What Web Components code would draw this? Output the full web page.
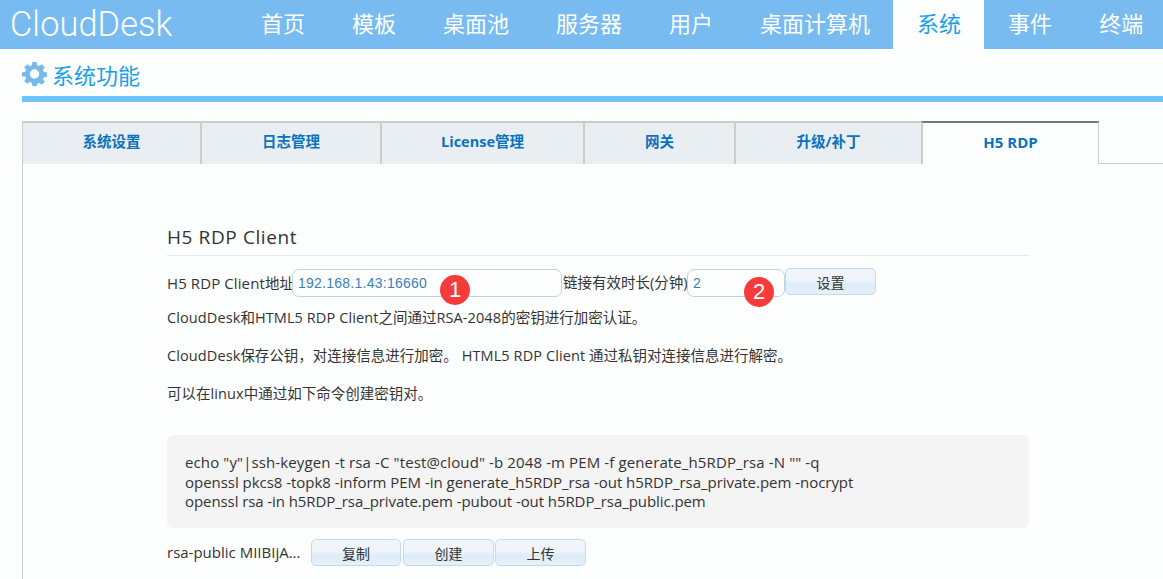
<!DOCTYPE html>
<html lang="zh"><head><meta charset="utf-8"><title>CloudDesk</title>
<style>
html,body{margin:0;padding:0;height:579px;overflow:hidden;background:#fdfffe;}
body{font-family:"Open Sans","Noto Sans CJK SC",sans-serif;font-size:14px;color:#333;}
</style></head><body>
<app-header></app-header>
<section-title>系统功能</section-title>
<tab-bar>
  <tab-item w="178" first>系统设置</tab-item>
  <tab-item w="180">日志管理</tab-item>
  <tab-item w="203"><i>License</i>管理</tab-item>
  <tab-item w="151">网关</tab-item>
  <tab-item w="187">升级<i>/</i>补丁</tab-item>
  <tab-item w="178" active><i style="font-size:15px">H5 RDP</i></tab-item>
</tab-bar>
<rdp-panel></rdp-panel>
<script>
function def(name, html, init){
  customElements.define(name, class extends HTMLElement{
    constructor(){super();this.attachShadow({mode:'open'}).innerHTML=html;}
    connectedCallback(){if(init)init(this);}
  });
}
const F='"Open Sans","Noto Sans CJK SC",sans-serif';
def('nav-item',`<style>
:host{display:block;flex:none;height:49px;line-height:47px;padding:0 23px 0 24px;font-size:22px;color:#fff;font-family:${F};white-space:nowrap}
:host([active]){background:#fdfffe;color:#1c9ee9}
</style><slot></slot>`);
def('app-header',`<style>
:host{display:flex;height:49px;background:#78bbf0;position:relative;overflow:hidden}
.logo{flex:none;width:237px;box-sizing:border-box;padding-left:10px;font:300 34.300px/48px Roboto,sans-serif;color:#fff;letter-spacing:.1px}
</style>
<div class="logo">CloudDesk</div>
<nav-item>首页</nav-item><nav-item>模板</nav-item><nav-item>桌面池</nav-item><nav-item>服务器</nav-item><nav-item>用户</nav-item><nav-item>桌面计算机</nav-item><nav-item active>系统</nav-item><nav-item>事件</nav-item><nav-item>终端</nav-item>`);
def('section-title',`<style>
:host{display:block;margin:0 0 0 22px;height:47px;border-bottom:6px solid #6cc6fb}
.r{display:flex;align-items:center;height:53px;gap:5px;font:22px/1 ${F};color:#1c9ee9}
svg{display:block;width:25px;height:25px;margin-top:-5px;flex:none}
span{margin-top:-1px}
</style><div class="r"><svg viewBox="0 0 24 24"><path fill="#78b9ec" fill-rule="evenodd" d="M10 1h4l.6 3.100 1.900.8 2.600-1.800 2.800 2.800-1.800 2.600.8 1.900L24 11v4l-3.100.6-.8 1.900 1.800 2.600-2.800 2.800-2.600-1.800-1.900.8L14 24h-4l-.6-3.100-1.900-.8-2.600 1.800-2.800-2.800 1.800-2.600-.8-1.900L0 15v-4l3.100-.6.8-1.900-1.800-2.600 2.800-2.800 2.600 1.800 1.900-.8zM12 8a4.500 4.500 0 1 0 0 9 4.500 4.500 0 0 0 0-9z"/></svg><span><slot></slot></span></div>`);
def('tab-bar',`<style>
:host{display:flex;margin:19px 0 0 22px;height:42px;border-bottom:1px solid #ccc}
</style><slot></slot>`);
def('tab-item',`<style>
:host{display:block;flex:none;box-sizing:border-box;height:43px;background:#e9eef3;border:2px solid #ccc;border-right-width:0;border-bottom:0;margin-bottom:-1px;text-align:center;font:bold 14.500px/38px ${F};color:#0b72bb;white-space:nowrap}
:host([first]){border-left-width:1px}
:host([active]){background:#fdfffe;border-top:2px solid #777;border-right:1px solid #ccc}
::slotted(i){font-style:normal}
</style><slot></slot>`,el=>{el.style.width=el.getAttribute('w')+'px'});
def('push-btn',`<style>
:host{display:block;box-sizing:border-box;height:27px;border:1px solid #c3d9ec;border-radius:5px;background:linear-gradient(#f1f6fb 0,#eef4fa 45%,#deecf8 62%,#e4f0fa);text-align:center;font:14px/27px ${F};color:#333;flex:none}
</style><slot></slot>`,el=>{el.style.width=el.getAttribute('w')+'px'});
def('text-field',`<style>
:host{display:block;box-sizing:border-box;height:28px;border:1px solid #bcd4ea;border-radius:7px;background:#fdfffe;padding:0 5px;font:14px/27px "Liberation Sans",sans-serif;letter-spacing:.25px;color:#3d7eb5;position:relative;flex:none}
.badge{position:absolute;top:var(--t);left:var(--l);width:30px;height:30px;border-radius:50%;background:#f73b3b;color:#fff;text-align:center;font:22px/30px "Liberation Sans",sans-serif;letter-spacing:0}
</style><slot></slot><span class="badge"></span>`,el=>{
  el.style.width=el.getAttribute('w')+'px';
  const b=el.shadowRoot.querySelector('.badge');b.textContent=el.getAttribute('n');
  b.style.setProperty('--l',el.getAttribute('bx')+'px');b.style.setProperty('--t',el.getAttribute('by')+'px');
});
def('code-block',`<style>
:host{display:block;box-sizing:border-box;height:93px;margin-top:13px;background:#f5f4f4;border-radius:6px;padding:18px;font:15px/19.500px ${F};color:#333;white-space:pre}
</style><slot></slot>`);
def('rdp-panel',`<style>
:host{display:block;box-sizing:border-box;margin-left:22px;height:415px;border-left:1px solid #ccc;padding:57px 0 0 144px;font:14.500px/20px ${F};color:#333}
.w{width:862px}
i{font-style:normal;letter-spacing:.1px}
h3{margin:0;font:500 19px/32px ${F};height:34px;border-bottom:1px solid #e5e7ea;color:#333;letter-spacing:.6px}
.row{display:flex;align-items:center;margin-top:12px;height:30px;white-space:nowrap}
.row>span{flex:none}
p{margin:0;height:38px;line-height:20px;white-space:nowrap}
.p1{margin-top:10px}
.btns{margin-top:9px}
.btns>span{width:144px}
.btns>span i{font-size:15px;letter-spacing:0}
.btns push-btn+push-btn{margin-left:1px}
.btns push-btn:nth-of-type(2){margin-left:2px}
.row push-btn.top{align-self:flex-start}
</style><div class="w">
<h3>H5 RDP Client</h3>
<div class="row"><span style="width:125px"><i style="font-size:15px">H5 RDP Client</i>地址</span>
<text-field w="270" n="1" bx="147" by="5">192.168.1.43:16660</text-field>
<span style="margin-left:1px;width:124px">链接有效时长(分钟)</span>
<text-field w="98" n="2" bx="56" by="7">2</text-field>
<push-btn w="91" class="top">设置</push-btn></div>
<p class="p1"><i>CloudDesk</i>和<i>HTML5 RDP Client</i>之间通过<i>RSA-2048</i>的密钥进行加密认证。</p>
<p><i>CloudDesk</i>保存公钥，对连接信息进行加密。 <i>HTML5 RDP Client</i> 通过私钥对连接信息进行解密。</p>
<p>可以在<i>linux</i>中通过如下命令创建密钥对。</p>
<code-block><span style="letter-spacing:.12px">echo "y"|ssh-keygen -t rsa -C "test@cloud" -b 2048 -m PEM -f generate_h5RDP_rsa -N "" -q</span>
<span style="letter-spacing:-.03px">openssl pkcs8 -topk8 -inform PEM -in generate_h5RDP_rsa -out h5RDP_rsa_private.pem -nocrypt</span>
<span style="letter-spacing:-.08px">openssl rsa -in h5RDP_rsa_private.pem -pubout -out h5RDP_rsa_public.pem</span></code-block>
<div class="row btns"><span><i>rsa-public MIIBIjA...</i></span><push-btn w="90">复制</push-btn><push-btn w="91">创建</push-btn><push-btn w="91">上传</push-btn></div>
</div>`);
</script>
</body></html>
